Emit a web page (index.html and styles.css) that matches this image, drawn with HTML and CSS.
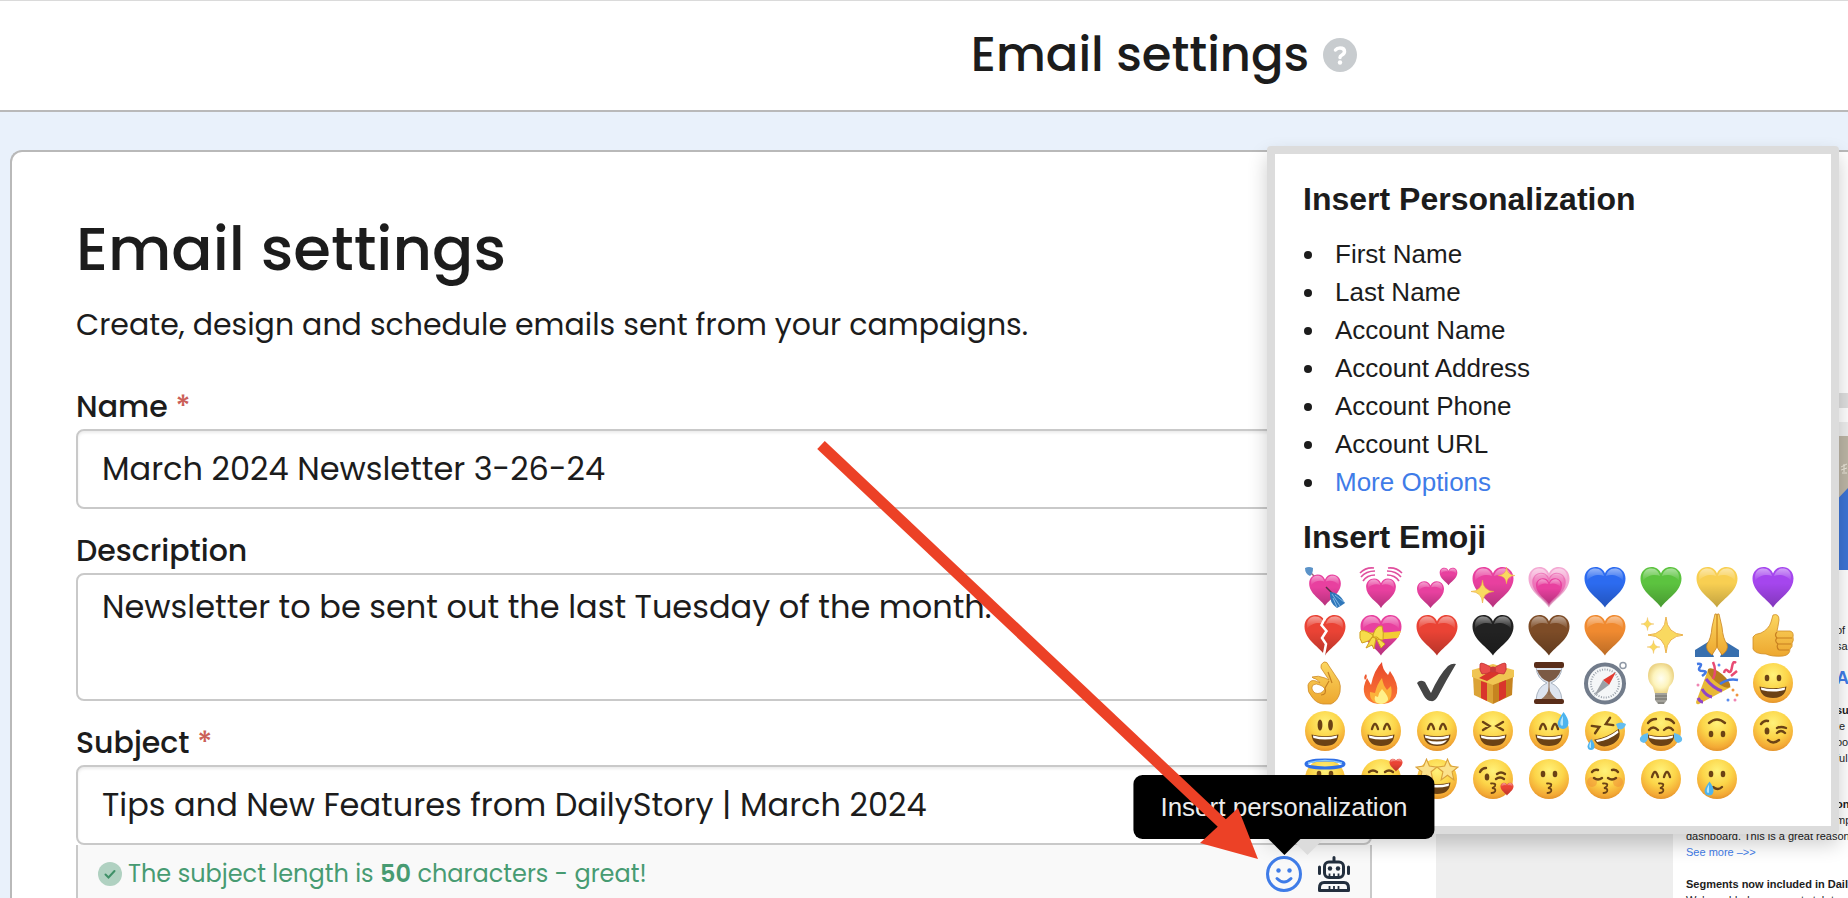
FILE: index.html
```html
<!DOCTYPE html>
<html lang="en">
<head>
    <meta charset="UTF-8">
    <meta name="viewport" content="width=device-width, initial-scale=1.0">
    <title>Email settings</title>
    <link rel="stylesheet" href="styles.css">
</head>
<body>
    <!-- Shared emoji shapes -->
    <svg class="sprite" aria-hidden="true">
        <defs>
            <radialGradient id="faceFill" cx="50%" cy="30%" r="72%">
                <stop offset="0" stop-color="#fff27a"/>
                <stop offset="0.5" stop-color="#fcd549"/>
                <stop offset="0.85" stop-color="#f3a935"/>
                <stop offset="1" stop-color="#e08f28"/>
            </radialGradient>
            <linearGradient id="gloss" x1="0" y1="0" x2="0" y2="1">
                <stop offset="0" stop-color="#fff" stop-opacity="0.5"/>
                <stop offset="1" stop-color="#fff" stop-opacity="0"/>
            </linearGradient>
            <linearGradient id="shade" x1="0" y1="0" x2="0" y2="1">
                <stop offset="0.4" stop-color="#000" stop-opacity="0"/>
                <stop offset="1" stop-color="#000" stop-opacity="0.22"/>
            </linearGradient>
            <linearGradient id="gold" x1="0" y1="0" x2="0" y2="1">
                <stop offset="0" stop-color="#fbd660"/>
                <stop offset="1" stop-color="#eda72f"/>
            </linearGradient>
            <linearGradient id="flame" x1="0" y1="0" x2="0" y2="1">
                <stop offset="0" stop-color="#e8472c"/>
                <stop offset="1" stop-color="#fb7a35"/>
            </linearGradient>
            <radialGradient id="bulb">
                <stop offset="0" stop-color="#fffef2"/>
                <stop offset="0.6" stop-color="#fdf4bd"/>
                <stop offset="1" stop-color="#ecd486"/>
            </radialGradient>
        </defs>
        <symbol id="heart" viewBox="0 0 44 44">
            <path fill="currentColor" d="M22 42.500C18 35 1.500 27 1.500 13.500C1.500 6.500 6.500 2 12.500 2C17 2 20.500 4.500 22 8.500C23.500 4.500 27 2 31.500 2C37.500 2 42.500 6.500 42.500 13.500C42.500 27 26 35 22 42.500Z"/>
            <path fill="url(#shade)" d="M22 42.500C18 35 1.500 27 1.500 13.500C1.500 6.500 6.500 2 12.500 2C17 2 20.500 4.500 22 8.500C23.500 4.500 27 2 31.500 2C37.500 2 42.500 6.500 42.500 13.500C42.500 27 26 35 22 42.500Z"/>
            <path fill="url(#gloss)" d="M4 12C4 6 8 3.500 12.500 3.500C17 3.500 20 7 21 11C16 9 8 10 4 16ZM40 12C40 6 36 3.500 31.500 3.500C27 3.500 24 7 23 11C28 9 36 10 40 16Z"/>
        </symbol>
        <symbol id="face" viewBox="0 0 44 44">
            <circle cx="22" cy="22" r="20" fill="url(#faceFill)"/>
        </symbol>
        <symbol id="grin" viewBox="0 0 44 44">
            <path fill="#6b4215" d="M8.500 25.500Q22 29 35.500 25.500Q34.500 37 22 37T8.500 25.500Z"/>
            <path fill="#fff" d="M10 26.500Q22 29.500 34 26.500Q34 28 33.500 29Q22 32 10.500 29Q10 28 10 26.500Z"/>
        </symbol>
        <symbol id="eyes" viewBox="0 0 44 44">
            <ellipse cx="16" cy="17" rx="2.300" ry="3.200" fill="#6b4215"/>
            <ellipse cx="28" cy="17" rx="2.300" ry="3.200" fill="#6b4215"/>
        </symbol>
        <symbol id="happyEyes" viewBox="0 0 44 44">
            <path class="ink" d="M13 20Q14.500 15 16 15T19 20M25 20Q26.500 15 28 15T31 20"/>
        </symbol>
        <symbol id="kiss" viewBox="0 0 44 44">
            <path class="ink thin" d="M20 26.500Q25.500 26 24 29Q23 30.500 21 31Q25.500 31.500 24 34.500Q23 36 20.500 36"/>
        </symbol>
        <symbol id="drop" viewBox="0 0 10 14">
            <path fill="#4db4ef" d="M5.500 0Q10 6 9.500 9.500Q9 14 5 14T.500 9.500Q1 6 5.500 0Z"/>
            <path fill="#b5e6fb" d="M5 3Q2 8 3 10.500Q4 12 5 11Z"/>
        </symbol>
        <symbol id="star" viewBox="0 0 20 20">
            <path fill="#fbe28c" stroke="#d9a13b" stroke-width="1" d="M10 1L12.500 7L19 8L14 12L15.500 19L10 15L4.500 19L6 12L1 8L7.500 7Z"/>
        </symbol>
        <symbol id="sparkle" viewBox="0 0 20 20">
            <path fill="#f9d960" stroke="#e9ac3e" stroke-width=".500" d="M10 0Q10.500 9.500 20 10Q10.500 10.500 10 20Q9.500 10.500 0 10Q9.500 9.500 10 0Z"/>
        </symbol>
    </svg>

    <header class="page-header">
        <h2 class="page-header-title">Email settings</h2>
        <button class="help-button" type="button" aria-label="Help">
            <svg viewBox="0 0 34 34" aria-hidden="true">
                <circle cx="17" cy="17" r="17" fill="#c8cccf"/>
                <path d="M12.500 12Q14 10 17 10Q21.500 10 21.500 13.500Q21.500 15.500 19 17Q17 18 17 19.500" fill="none" stroke="#fff" stroke-width="3.500" stroke-linecap="round"/>
                <circle cx="17" cy="24.500" r="2.200" fill="#fff"/>
            </svg>
        </button>
    </header>

    <main class="card">
        <form class="settings-form">
            <h1 class="form-title">Email settings</h1>
            <p class="form-intro">Create, design and schedule emails sent from your campaigns.</p>

            <div class="field">
                <label for="name">Name <span class="required">*</span></label>
                <input class="control" id="name" type="text" value="March 2024 Newsletter 3-26-24">
            </div>

            <div class="field">
                <label for="description">Description</label>
                <textarea class="control control-area" id="description">Newsletter to be sent out the last Tuesday of the month.</textarea>
            </div>

            <div class="field">
                <label for="subject">Subject <span class="required">*</span></label>
                <input class="control" id="subject" type="text" value="Tips and New Features from DailyStory | March 2024">
                <div class="subject-bar">
                    <svg class="check-icon" viewBox="0 0 24 24" aria-hidden="true">
                        <circle cx="12" cy="12" r="12" fill="#b0d1c1"/>
                        <path d="M7.500 12.500L10.500 15.500L16.500 9" fill="none" stroke="#3f9068" stroke-width="2" stroke-linecap="round"/>
                    </svg>
                    <span class="subject-hint">The subject length is <b>50</b> characters - great!</span>
                    <div class="personalize">
                        <button class="icon-button" type="button" aria-label="Smiley">
                            <svg viewBox="0 0 36 36" width="36" height="36" fill="none" stroke="#3f7ce8" stroke-width="3" stroke-linecap="round" aria-hidden="true">
                                <circle cx="18" cy="18" r="16.500"/>
                                <path d="M11 22.500Q18 29.500 25 22.500"/>
                                <circle cx="12.500" cy="14.500" r="2.200" fill="#3f7ce8" stroke="none"/>
                                <circle cx="23.500" cy="14.500" r="2.200" fill="#3f7ce8" stroke="none"/>
                            </svg>
                        </button>
                        <div class="tooltip" role="tooltip">Insert personalization</div>
                    </div>
                    <button class="icon-button" type="button" aria-label="Robot">
                        <svg viewBox="0 0 32 36" width="32" height="36" fill="none" stroke="#232f3e" stroke-width="3" stroke-linecap="round" aria-hidden="true">
                            <path d="M16 1.500V5M1.500 11V17.500M30.500 11V17.500"/>
                            <rect x="6.500" y="6" width="19" height="15.500" rx="4.500"/>
                            <circle cx="12" cy="12.500" r="2.200" fill="#232f3e" stroke="none"/>
                            <circle cx="20" cy="12.500" r="2.200" fill="#232f3e" stroke="none"/>
                            <path stroke-width="1.800" stroke-linecap="butt" d="M11.500 17.500V20.500M16 17.500V20.500M20.500 17.500V20.500M11.500 30V34M16 30V34M20.500 30V34"/>
                            <path d="M6 26.500H26Q30.500 26.500 30.500 32V34.500H1.500V32Q1.500 26.500 6 26.500Z" stroke-linejoin="round"/>
                        </svg>
                    </button>
                </div>
            </div>
        </form>

        <aside class="preview">
            <div class="preview-frame"></div>
            <div class="preview-page">
                <div class="email">
                    <svg class="email-banner" viewBox="0 0 175 134" preserveAspectRatio="none" aria-hidden="true">
                        <rect width="175" height="134" fill="#bdb6a6"/>
                        <path d="M112 118L175 52V134H112Z" fill="#3c74d6"/>
                        <path d="M168 31L174 28M168 34L174 32M169 37H174M171 28V36" stroke="#eee9dd" fill="none"/>
                    </svg>
                    <div class="email-lines">
                        <p>of<br>sa</p>
                        <p class="email-heading">AL</p>
                        <p><b>su</b><br>te<br>oo<br>ful</p>
                        <p class="email-gap"><b>on</b><br>mp</p>
                    </div>
                    <p class="email-text">dashboard. This is a great reason for<br><a href="#">See more –&gt;&gt;</a></p>
                    <p class="email-text"><br><b>Segments now included in DailyStory</b><br>We've added a segments tab to your</p>
                </div>
            </div>
        </aside>

        <section class="popover">
            <h3>Insert Personalization</h3>
            <ul class="token-list">
                <li>First Name</li>
                <li>Last Name</li>
                <li>Account Name</li>
                <li>Account Address</li>
                <li>Account Phone</li>
                <li>Account URL</li>
                <li><a href="#">More Options</a></li>
            </ul>
            <h3>Insert Emoji</h3>
            <div class="emoji-grid">
                <!-- Hearts -->
                <button class="emoji pink" type="button"><svg viewBox="0 0 44 44"><path d="M4 4L36 36" stroke="#9a6b7c" stroke-width="1.500"/><use href="#heart" x="5" y="8" width="34" height="34"/><path fill="#5b93c8" d="M2 3Q6 1 10 3Q10 9 7 11Q2 9 2 3Z"/><path stroke="#5b2f46" stroke-width="1.500" d="M23 22L32 31"/><path fill="#2f77ba" d="M27 27Q36 27 42 38Q38 41 34 43Q26 38 27 27Z"/><path stroke="#82b8e4" d="M29 29L37 41M30 33L34 42M32 30L41 37" fill="none"/></svg></button>
                <button class="emoji pink" type="button"><svg viewBox="0 0 44 44"><use href="#heart" x="6" y="12" width="32" height="32"/><g fill="none" stroke="#e04f9e" stroke-width="1.600"><path d="M1 8Q7 2 15 3M2 12Q7 6 16 6M4 16Q8 10 16 10"/><path d="M43 8Q37 2 29 3M42 12Q37 6 28 6M40 16Q36 10 28 10"/></g></svg></button>
                <button class="emoji pink" type="button"><svg viewBox="0 0 44 44"><use href="#heart" x="1" y="15" width="29" height="29"/><use href="#heart" x="24" y="2" width="19" height="19"/></svg></button>
                <button class="emoji pink" type="button"><svg viewBox="0 0 44 44"><use href="#heart"/><use href="#sparkle" x="0" y="15" width="23" height="23"/><use href="#sparkle" x="27" y="2" width="17" height="17"/></svg></button>
                <button class="emoji pink" type="button"><svg viewBox="0 0 44 44"><g opacity=".45"><use href="#heart"/></g><g opacity=".5"><use href="#heart" x="4" y="6" width="36" height="36"/></g><use href="#heart" x="8" y="12" width="28" height="28"/></svg></button>
                <button class="emoji blue" type="button"><svg viewBox="0 0 44 44"><use href="#heart"/></svg></button>
                <button class="emoji green" type="button"><svg viewBox="0 0 44 44"><use href="#heart"/></svg></button>
                <button class="emoji yellow" type="button"><svg viewBox="0 0 44 44"><use href="#heart"/></svg></button>
                <button class="emoji purple" type="button"><svg viewBox="0 0 44 44"><use href="#heart"/></svg></button>

                <button class="emoji red" type="button"><svg viewBox="0 0 44 44"><use href="#heart"/><path d="M22 5L18.500 12L23.500 18L19 25L23 31L20.500 44" fill="none" stroke="#fff" stroke-width="2.500"/></svg></button>
                <button class="emoji pink" type="button"><svg viewBox="0 0 44 44"><use href="#heart"/><path fill="#f3cd34" d="M2 19Q22 21 42 18L39 25Q22 27 5 26Z"/><path fill="#f7dc4a" stroke="#cf9f22" d="M14 22Q3 15 1 19Q0 26 3 30Q10 29 14 24ZM14 22Q17 12 23 13Q25 20 24 27Q18 27 14 24ZM13 24L7 35L13 32L15 36L17 25L22 35L26 31L18 24Z"/></svg></button>
                <button class="emoji red" type="button"><svg viewBox="0 0 44 44"><use href="#heart"/></svg></button>
                <button class="emoji black" type="button"><svg viewBox="0 0 44 44"><use href="#heart"/></svg></button>
                <button class="emoji brown" type="button"><svg viewBox="0 0 44 44"><use href="#heart"/></svg></button>
                <button class="emoji orange" type="button"><svg viewBox="0 0 44 44"><use href="#heart"/></svg></button>
                <button class="emoji" type="button"><svg viewBox="0 0 44 44"><use href="#sparkle" x="9" y="3" width="36" height="38"/><use href="#sparkle" x="2" y="2" width="13" height="18"/><use href="#sparkle" x="8" y="25" width="13" height="18"/></svg></button>
                <button class="emoji" type="button"><svg viewBox="0 0 44 44"><path fill="#386fae" d="M0 37L13 29L19 44H0ZM44 37L31 29L25 44H44Z"/><path fill="url(#gold)" stroke="#c98420" stroke-width=".800" d="M20 1Q22 0 22 3V34L17 42Q10 37 12 31Q16 26 17 14ZM24 1Q22 0 22 3V34L27 42Q34 37 32 31Q28 26 27 14Z"/></svg></button>
                <button class="emoji" type="button"><svg viewBox="0 0 44 44"><path fill="url(#gold)" stroke="#d18e27" stroke-width=".800" d="M22 2Q28 0 28 7Q27 14 26 18H39Q43 19 42 24Q43 28 41 30Q42 34 39 36Q39 42 32 43Q21 44 15 41Q4 41 2 36V24Q3 21 10 20Q18 16 20 9Z"/><path d="M26 25H41M27 31H40M28 37H38M26 19Q23 22 26 25Q23 28 27 31Q25 34 28 37" fill="none" stroke="#c77f20" stroke-width="1.200"/></svg></button>

                <!-- Objects -->
                <button class="emoji" type="button"><svg viewBox="0 0 44 44"><path fill="url(#gold)" stroke="#cf8c28" stroke-width=".800" fill-rule="evenodd" d="M21 1Q24 0 26 5L36 20Q38 24 37 31Q35 40 28 43H20Q13 42 9 36Q4 31 5 24Q7 18 13 20L17 22Q16 20 13 18Q9 17 9 16Q15 14 22 17L26 19L18 7Q17 3 21 1ZM10 24Q7 28 12 32Q18 34 22 28Q20 25 17 24Q13 22 10 24Z"/><path d="M26 20L22 27Q24 34 18 34M29 22L25 11" fill="none" stroke="#c68123" stroke-width="1.200"/></svg></button>
                <button class="emoji" type="button"><svg viewBox="0 0 44 44"><path fill="url(#flame)" d="M20 43Q7 42 5 31Q4 25 8 17L12 24Q15 9 23 1Q23 8 29 14L31 10Q40 23 38 32Q36 42 24 43ZM7 13Q9 16 6 19Q4 16 7 13Z"/><path fill="#fbb23b" d="M21 43Q10 41 11 31L16 32Q18 23 23 17Q24 24 28 29L32 25Q35 41 23 43Z"/><path fill="#fff08a" d="M22 43Q14 42 16 35L19 36Q20 31 23 28Q30 36 29 39Q26 43 22 43Z"/></svg></button>
                <button class="emoji" type="button"><svg viewBox="0 0 44 44"><path fill="#454545" d="M2 22Q5 18 10 21Q12 25 16 32Q24 14 33 5Q37 2 41 3Q32 18 23 35Q20 41 16 40Q12 40 9 35Z"/></svg></button>
                <button class="emoji" type="button"><svg viewBox="0 0 44 44"><path fill="#dba336" d="M2 15L22 21V43L3 34Z"/><path fill="#c68420" d="M42 15L22 21V43L41 34Z"/><path fill="#f0c552" d="M1 9L22 3L43 9V16L22 24L1 16Z"/><path fill="#d9352c" d="M10 20L16 22V40L10 37ZM28 22L35 19V36L28 40ZM28 5L36 8L16 20L8 17Z"/><path fill="#e94d4b" stroke="#b92f31" stroke-width=".700" d="M21 7Q10 0 9 3Q8 10 11 13Q17 13 21 10ZM23 7Q34 0 35 3Q36 10 33 13Q27 13 23 10Z"/><circle cx="22" cy="8.500" r="3" fill="#c9393a"/></svg></button>
                <button class="emoji" type="button"><svg viewBox="0 0 44 44"><path fill="#dde4ef" stroke="#a9b3c0" d="M9 6H35Q34 18 24 22Q34 26 35 39H9Q10 26 20 22Q10 18 9 6Z"/><path fill="#7b5a44" d="M10 9H34Q31 18 22 21Q13 18 10 9Z"/><path fill="#9a775c" d="M22 26Q23 34 31 39H13Q21 34 22 26Z"/><path stroke="#8a6a50" d="M22 20V34"/><rect x="7" y="1" width="30" height="6" rx="2" fill="#592d19"/><rect x="7" y="38" width="30" height="5" rx="2" fill="#592d19"/></svg></button>
                <button class="emoji" type="button"><svg viewBox="0 0 44 44"><circle cx="40" cy="4.500" r="3" fill="none" stroke="#9099a6" stroke-width="1.500"/><circle cx="22" cy="22.500" r="19" fill="#f4f6f7" stroke="#727c8b" stroke-width="4"/><circle cx="22" cy="22.500" r="14" fill="none" stroke="#9aa2ab" stroke-width="2" stroke-dasharray="1 1.500"/><path fill="#e33b30" d="M33 11L26 24L20 19Z"/><path fill="#9ba0a6" d="M11 35L20 19L26 24Z"/></svg></button>
                <button class="emoji" type="button"><svg viewBox="0 0 44 44"><path fill="url(#bulb)" d="M22 2Q35 2 35 15Q35 21 30 26L28 33H16L14 26Q9 21 9 15Q9 2 22 2Z"/><path fill="#a3a29b" d="M16 32H28V39L25 43H19L16 39Z"/><path stroke="#6e6d69" stroke-width="1.200" d="M16 35H28M16 38H28M19 42H25"/></svg></button>
                <button class="emoji" type="button"><svg viewBox="0 0 44 44"><path fill="#e8b935" d="M13 9L36 26L4 43Q1 44 1 41Z"/><path fill="none" stroke="#9045c7" stroke-width="3" d="M11 18Q18 27 27 30M7 28Q11 35 17 36M3 37Q5 41 8 41"/><ellipse cx="24" cy="17" rx="5" ry="14" transform="rotate(-50 24 17)" fill="#b77d1e"/><g fill="none" stroke-width="2.500"><path stroke="#4379e5" d="M2 3Q8 2 5 6T8 10T7 15M25 23Q33 17 43 19"/><path stroke="#e84a72" d="M18 1Q22 10 18 18M29 12Q30 7 33 10T37 6T41 2M42 10L36 15"/></g><g fill="#f0953e"><circle cx="38" cy="29" r="1.500"/><circle cx="42" cy="34" r="1.500"/><circle cx="33" cy="39" r="1.500" fill="#5a8df0"/><circle cx="40" cy="39" r="1.500" fill="#ef86b4"/><circle cx="24" cy="4" r="1.500" fill="#5a8df0"/><circle cx="3" cy="24" r="1.500" fill="#ef86b4"/></g></svg></button>
                <button class="emoji" type="button"><svg viewBox="0 0 44 44"><use href="#face"/><use href="#eyes"/><use href="#grin"/></svg></button>

                <!-- Faces -->
                <button class="emoji" type="button"><svg viewBox="0 0 44 44"><use href="#face"/><g fill="#6b4215"><ellipse cx="17" cy="16" rx="2.400" ry="5.500"/><ellipse cx="27.500" cy="16" rx="2.400" ry="5.500"/></g><use href="#grin"/></svg></button>
                <button class="emoji" type="button"><svg viewBox="0 0 44 44"><use href="#face"/><use href="#happyEyes"/><use href="#grin"/></svg></button>
                <button class="emoji" type="button"><svg viewBox="0 0 44 44"><use href="#face"/><use href="#happyEyes"/><use href="#grin"/><path fill="#fff" d="M12 31Q22 34 32 31Q29 35.500 22 35.500T12 31Z"/></svg></button>
                <button class="emoji" type="button"><svg viewBox="0 0 44 44"><use href="#face"/><path class="ink" d="M12 13L18.500 17L12 21M32 13L25.500 17L32 21"/><use href="#grin"/></svg></button>
                <button class="emoji" type="button"><svg viewBox="0 0 44 44"><use href="#face"/><use href="#happyEyes"/><use href="#grin"/><use href="#drop" x="30" y="3" width="12" height="17"/></svg></button>
                <button class="emoji" type="button"><svg viewBox="0 0 44 44"><use href="#face"/><g transform="rotate(-24 22 22)"><path class="ink" d="M12 12L18.500 16L12 20M32 12L25.500 16L32 20"/><use href="#grin"/></g><use href="#drop" x="4" y="30" width="8" height="11"/><path fill="#63bdf0" d="M33 15Q38 12 43 15Q41 22 35 20Z"/></svg></button>
                <button class="emoji" type="button"><svg viewBox="0 0 44 44"><use href="#face"/><path class="ink" d="M9 14Q12 10 17 10M35 14Q32 10 27 10M10 21Q14 16 19 21M25 21Q30 16 34 21"/><use href="#grin"/><path fill="#63bdf0" d="M9 24Q10 32 5 34Q0 33 1 29Q3 25 9 24ZM35 24Q34 32 39 34Q44 33 43 29Q41 25 35 24Z"/></svg></button>
                <button class="emoji" type="button"><svg viewBox="0 0 44 44"><use href="#face"/><g transform="rotate(180 22 21)"><use href="#eyes"/><path class="ink" d="M14 28Q22 35 30 28"/></g></svg></button>
                <button class="emoji" type="button"><svg viewBox="0 0 44 44"><use href="#face"/><ellipse cx="16" cy="22" rx="2.400" ry="3.500" fill="#6b4215"/><path class="ink" d="M10 15Q13 11 17 12M26 19Q30 17 35 19M26 24Q30 20 34 24M17 31Q22 36 28 31"/></svg></button>

                <button class="emoji" type="button"><svg viewBox="0 0 44 44"><use href="#face"/><use href="#eyes"/><path class="ink" d="M14 28Q22 35 30 28"/><ellipse cx="22" cy="7" rx="19" ry="4" fill="none" stroke="#2f6fe6" stroke-width="3"/><path d="M5 6Q22 1 39 6" fill="none" stroke="#86c8fa" stroke-width="1.500"/></svg></button>
                <button class="emoji red" type="button"><svg viewBox="0 0 44 44"><use href="#face"/><path class="ink" d="M10 15Q14 12 18 15M26 15Q30 12 34 15M14 28Q22 35 30 28"/><use href="#heart" x="30" y="1" width="14" height="14"/></svg></button>
                <button class="emoji" type="button"><svg viewBox="0 0 44 44"><use href="#face"/><use href="#grin"/><use href="#star" x="0" y="1" width="23" height="23"/><use href="#star" x="21" y="1" width="23" height="23"/></svg></button>
                <button class="emoji red" type="button"><svg viewBox="0 0 44 44"><use href="#face"/><ellipse cx="16" cy="20" rx="2.300" ry="3.500" fill="#6b4215"/><path class="ink" d="M9 15Q11 11 15 11M26 17Q30 14 34 17M25 22Q29 19 33 22"/><use href="#kiss"/><use href="#heart" x="29" y="25" width="14" height="14"/></svg></button>
                <button class="emoji" type="button"><svg viewBox="0 0 44 44"><use href="#face"/><use href="#eyes"/><use href="#kiss"/></svg></button>
                <button class="emoji" type="button"><svg viewBox="0 0 44 44"><use href="#face"/><g fill="#ef8a36" opacity=".45"><circle cx="9" cy="25" r="5"/><circle cx="35" cy="25" r="5"/></g><path class="ink" d="M9 15Q11 12 15 13M35 15Q33 12 29 13M11 21Q15 24 19 21M25 21Q29 24 33 21"/><use href="#kiss"/></svg></button>
                <button class="emoji" type="button"><svg viewBox="0 0 44 44"><use href="#face"/><use href="#happyEyes"/><use href="#kiss"/></svg></button>
                <button class="emoji" type="button"><svg viewBox="0 0 44 44"><use href="#face"/><use href="#eyes"/><path class="ink" d="M18 30Q23 34 27 30"/><use href="#drop" x="9" y="24" width="10" height="15"/></svg></button>
            </div>
        </section>

        <!-- Pointer to the personalization button -->
        <svg class="pointer" viewBox="0 0 440 416" width="440" height="416" aria-hidden="true">
            <path d="M1 2L405 383" stroke="#ec4126" stroke-width="11"/>
            <path d="M438 416L380 400L418 365Z" fill="#ec4126"/>
        </svg>
    </main>
</body>
</html>
```
FILE: styles.css
```css
* {
    box-sizing: border-box;
    margin: 0;
    padding: 0;
}

body {
    font-family: Poppins, Inter, sans-serif;
    background-color: #e9f1fb;
    color: #1c1c1c;
    height: 100vh;
    display: flex;
    flex-direction: column;
    overflow: hidden;
}

a {
    color: #3f7ce8;
    text-decoration: none;
}

button {
    background: none;
    border: none;
    cursor: pointer;
}

svg {
    display: block;
}

.sprite {
    position: absolute;
    width: 0;
    height: 0;
}

/* Header */
.page-header {
    display: flex;
    align-items: center;
    justify-content: center;
    gap: 14px;
    height: 112px;
    flex-shrink: 0;
    padding: 0 0 2px 480px;
    background: #fff;
    border-top: 1px solid #dadada;
    border-bottom: 2px solid #b9b9b9;
}

.page-header-title {
    font-size: 48px;
    font-weight: 500;
    line-height: 56px;
}

.help-button {
    width: 34px;
    height: 34px;
}

/* Main card */
.card {
    position: relative;
    flex: 1;
    display: grid;
    grid-template-columns: minmax(0, 1fr) 412px;
    gap: 64px;
    margin: 38px 0 0 10px;
    padding-left: 64px;
    background: #fff;
    border: 2px solid #b9b9b9;
    border-width: 2px 0 0 2px;
    border-radius: 12px 0 0 0;
}

.settings-form {
    padding-top: 61px;
}

.form-title {
    font-size: 61px;
    font-weight: 500;
    line-height: 72px;
}

.form-intro {
    margin: 20px 0 46px;
    font-size: 30px;
    line-height: 40px;
}

.field {
    margin-bottom: 26px;
}

.field label {
    display: block;
    margin-bottom: 6px;
    font-size: 30px;
    font-weight: 500;
    line-height: 32px;
}

.required {
    color: #cb5f58;
}

.control {
    display: block;
    width: 100%;
    height: 80px;
    padding: 0 24px;
    font: inherit;
    font-size: 32px;
    line-height: 40px;
    color: inherit;
    background: #fff;
    border: 2px solid #c9c9c9;
    border-radius: 8px;
    box-shadow: inset 0 2px 3px rgba(0, 0, 0, 0.08);
}

.control-area {
    height: 128px;
    padding-top: 12px;
    resize: none;
    box-shadow: none;
}

.subject-bar {
    display: flex;
    align-items: center;
    height: 58px;
    padding: 0 20px;
    background: #f9f9f9;
    border: 2px solid #c9c9c9;
    border-width: 0 2px;
}

.check-icon {
    width: 24px;
    height: 24px;
    margin-right: 6px;
}

.subject-hint {
    flex: 1;
    font-size: 24px;
    line-height: 32px;
    color: #479b72;
}

.subject-hint b {
    font-weight: 600;
}

.personalize {
    position: relative;
    margin-right: 16px;
}

.icon-button {
    display: block;
}

.tooltip {
    position: absolute;
    z-index: 3;
    bottom: 53px;
    left: 50%;
    transform: translateX(-50%);
    padding: 16px 27px;
    font-family: "Liberation Sans", Arial, sans-serif;
    font-size: 26px;
    line-height: 32px;
    white-space: nowrap;
    color: #ececec;
    background: #000;
    border-radius: 9px;
}

.tooltip::before,
.tooltip::after {
    content: "";
    position: absolute;
    top: 100%;
    left: 50%;
    margin-left: -16px;
    border: 16px solid transparent;
    border-top-color: #000;
    border-bottom: 0;
}

.tooltip::before {
    margin-left: 7px;
    border-top-color: #dcdcdc;
}

/* Email preview */
.preview {
    display: flex;
    flex-direction: column;
    margin-top: 241px;
    min-width: 0;
    overflow: hidden;
}

.preview-frame {
    height: 29px;
    flex-shrink: 0;
    border-top: 15px solid #dfdfdf;
}

.preview-page {
    flex: 1;
    padding: 14px 0 0 237px;
    background: #eee;
}

.email {
    height: 100%;
    background: #fff;
    font-family: "Liberation Sans", Arial, sans-serif;
    font-size: 11px;
    line-height: 16px;
    white-space: nowrap;
}

.email-banner {
    width: 100%;
    height: 134px;
}

.email-lines {
    padding: 52px 0 0 163px;
}

.email-heading {
    padding: 16px 0;
    font-size: 18px;
    font-weight: bold;
    color: #3f7ce8;
}

.email-gap {
    padding-top: 30px;
}

.email-text {
    padding-left: 13px;
}

/* Personalization popover */
.popover {
    position: absolute;
    z-index: 2;
    top: -6px;
    right: 9px;
    width: 572px;
    height: 688px;
    padding: 27px 28px;
    font-family: "Liberation Sans", Arial, sans-serif;
    background: #fff;
    border: 8px solid #dcdcdc;
    border-radius: 4px;
    box-shadow: 0 10px 20px rgba(0, 0, 0, 0.2);
}

.popover h3 {
    font-size: 32px;
    line-height: 36px;
}

.token-list {
    margin: 18px 0;
    padding-left: 24px;
    font-size: 26px;
    line-height: 38px;
}

.token-list li {
    padding-left: 8px;
}

.emoji-grid {
    display: grid;
    grid-template-columns: repeat(9, 44px);
    gap: 4px 12px;
    margin-top: 10px;
}

.emoji {
    width: 44px;
    height: 44px;
}

.ink {
    fill: none;
    stroke: #6b4215;
    stroke-width: 2.4px;
    stroke-linecap: round;
}

.ink.thin {
    stroke-width: 1.8px;
}

.pink { color: #e8409f; }
.blue { color: #2c6bf0; }
.green { color: #5cc33f; }
.yellow { color: #f8cf52; }
.purple { color: #a546ee; }
.red { color: #ea4335; }
.black { color: #222; }
.brown { color: #7d4c27; }
.orange { color: #f08a30; }

.pointer {
    position: absolute;
    z-index: 4;
    top: 291px;
    left: 808px;
    overflow: visible;
}
```
